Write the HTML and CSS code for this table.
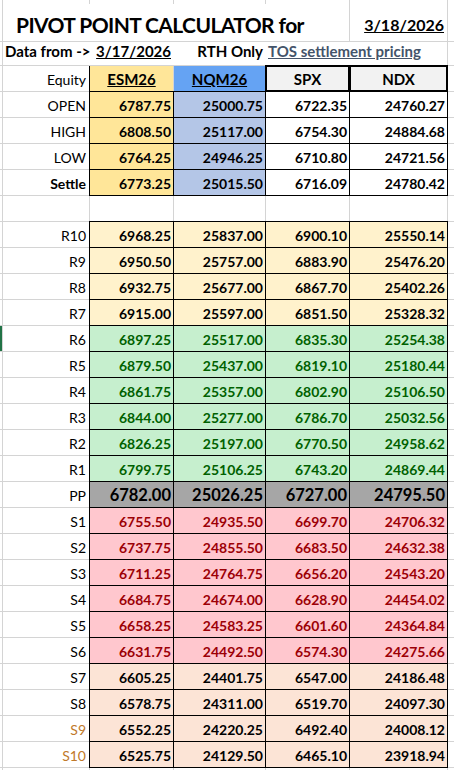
FILE: index.html
```html
<!DOCTYPE html>
<html lang="en">
<head>
  <meta charset="UTF-8" />
  <meta name="viewport" content="width=device-width, initial-scale=1" />
  <title>Pivot Point Calculator</title>
  <link rel="stylesheet" href="styles.css">
</head>
<body>

<div class="sheet">

  <!-- top sliver of the row above -->
  <div class="row">
    <div class="c"></div><div class="c"></div><div class="c"></div><div class="c"></div>
    <div class="c"></div><div class="c"></div><div class="c"></div>
  </div>

  <div class="row">
    <div class="c"></div>
    <div class="c title">PIVOT POINT CALCULATOR for</div>
    <div class="c today">3/18/2026</div>
    <div class="c"></div>
  </div>

  <div class="row">
    <div class="c"></div>
    <div class="c info">
      <span class="info-from">Data from -&gt;</span>
      <span class="info-date">3/17/2026</span>
      <span class="info-rth">RTH Only</span>
      <span class="info-link">TOS settlement pricing</span>
    </div>
    <div class="c"></div>
  </div>

  <div class="row">
    <div class="c"></div>
    <div class="c lbl">Equity</div>
    <div class="c hdr es-hdr"><u>ESM26</u></div>
    <div class="c hdr nq-hdr"><u>NQM26</u></div>
    <div class="c hdr ix-hdr">SPX</div>
    <div class="c hdr ix-hdr">NDX</div>
    <div class="c"></div>
  </div>

  <!-- prior session -->
  <div class="row">
    <div class="c"></div><div class="c lbl">OPEN</div>
    <div class="c num es">6787.75</div><div class="c num nq">25000.75</div>
    <div class="c num">6722.35</div><div class="c num">24760.27</div><div class="c"></div>
  </div>
  <div class="row">
    <div class="c"></div><div class="c lbl">HIGH</div>
    <div class="c num es">6808.50</div><div class="c num nq">25117.00</div>
    <div class="c num">6754.30</div><div class="c num">24884.68</div><div class="c"></div>
  </div>
  <div class="row">
    <div class="c"></div><div class="c lbl">LOW</div>
    <div class="c num es">6764.25</div><div class="c num nq">24946.25</div>
    <div class="c num">6710.80</div><div class="c num">24721.56</div><div class="c"></div>
  </div>
  <div class="row">
    <div class="c"></div><div class="c lbl bold">Settle</div>
    <div class="c num es">6773.25</div><div class="c num nq">25015.50</div>
    <div class="c num">6716.09</div><div class="c num">24780.42</div><div class="c"></div>
  </div>

  <div class="row">
    <div class="c"></div><div class="c"></div><div class="c"></div><div class="c"></div>
    <div class="c"></div><div class="c"></div><div class="c"></div>
  </div>

  <!-- resistance -->
  <div class="row far-r">
    <div class="c"></div><div class="c lbl">R10</div>
    <div class="c num">6968.25</div><div class="c num">25837.00</div>
    <div class="c num">6900.10</div><div class="c num">25550.14</div><div class="c"></div>
  </div>
  <div class="row far-r">
    <div class="c"></div><div class="c lbl">R9</div>
    <div class="c num">6950.50</div><div class="c num">25757.00</div>
    <div class="c num">6883.90</div><div class="c num">25476.20</div><div class="c"></div>
  </div>
  <div class="row far-r">
    <div class="c"></div><div class="c lbl">R8</div>
    <div class="c num">6932.75</div><div class="c num">25677.00</div>
    <div class="c num">6867.70</div><div class="c num">25402.26</div><div class="c"></div>
  </div>
  <div class="row far-r">
    <div class="c"></div><div class="c lbl">R7</div>
    <div class="c num">6915.00</div><div class="c num">25597.00</div>
    <div class="c num">6851.50</div><div class="c num">25328.32</div><div class="c"></div>
  </div>
  <div class="row near-r">
    <div class="c marker"></div><div class="c lbl">R6</div>
    <div class="c num">6897.25</div><div class="c num">25517.00</div>
    <div class="c num">6835.30</div><div class="c num">25254.38</div><div class="c"></div>
  </div>
  <div class="row near-r">
    <div class="c"></div><div class="c lbl">R5</div>
    <div class="c num">6879.50</div><div class="c num">25437.00</div>
    <div class="c num">6819.10</div><div class="c num">25180.44</div><div class="c"></div>
  </div>
  <div class="row near-r">
    <div class="c"></div><div class="c lbl">R4</div>
    <div class="c num">6861.75</div><div class="c num">25357.00</div>
    <div class="c num">6802.90</div><div class="c num">25106.50</div><div class="c"></div>
  </div>
  <div class="row near-r">
    <div class="c"></div><div class="c lbl">R3</div>
    <div class="c num">6844.00</div><div class="c num">25277.00</div>
    <div class="c num">6786.70</div><div class="c num">25032.56</div><div class="c"></div>
  </div>
  <div class="row near-r">
    <div class="c"></div><div class="c lbl">R2</div>
    <div class="c num">6826.25</div><div class="c num">25197.00</div>
    <div class="c num">6770.50</div><div class="c num">24958.62</div><div class="c"></div>
  </div>
  <div class="row near-r">
    <div class="c"></div><div class="c lbl">R1</div>
    <div class="c num">6799.75</div><div class="c num">25106.25</div>
    <div class="c num">6743.20</div><div class="c num">24869.44</div><div class="c"></div>
  </div>

  <!-- pivot -->
  <div class="row pivot">
    <div class="c"></div><div class="c lbl">PP</div>
    <div class="c num">6782.00</div><div class="c num">25026.25</div>
    <div class="c num">6727.00</div><div class="c num">24795.50</div><div class="c"></div>
  </div>

  <!-- support -->
  <div class="row near-s">
    <div class="c"></div><div class="c lbl">S1</div>
    <div class="c num">6755.50</div><div class="c num">24935.50</div>
    <div class="c num">6699.70</div><div class="c num">24706.32</div><div class="c"></div>
  </div>
  <div class="row near-s">
    <div class="c"></div><div class="c lbl">S2</div>
    <div class="c num">6737.75</div><div class="c num">24855.50</div>
    <div class="c num">6683.50</div><div class="c num">24632.38</div><div class="c"></div>
  </div>
  <div class="row near-s">
    <div class="c"></div><div class="c lbl">S3</div>
    <div class="c num">6711.25</div><div class="c num">24764.75</div>
    <div class="c num">6656.20</div><div class="c num">24543.20</div><div class="c"></div>
  </div>
  <div class="row near-s">
    <div class="c"></div><div class="c lbl">S4</div>
    <div class="c num">6684.75</div><div class="c num">24674.00</div>
    <div class="c num">6628.90</div><div class="c num">24454.02</div><div class="c"></div>
  </div>
  <div class="row near-s">
    <div class="c"></div><div class="c lbl">S5</div>
    <div class="c num">6658.25</div><div class="c num">24583.25</div>
    <div class="c num">6601.60</div><div class="c num">24364.84</div><div class="c"></div>
  </div>
  <div class="row near-s">
    <div class="c"></div><div class="c lbl">S6</div>
    <div class="c num">6631.75</div><div class="c num">24492.50</div>
    <div class="c num">6574.30</div><div class="c num">24275.66</div><div class="c"></div>
  </div>
  <div class="row far-s">
    <div class="c"></div><div class="c lbl">S7</div>
    <div class="c num">6605.25</div><div class="c num">24401.75</div>
    <div class="c num">6547.00</div><div class="c num">24186.48</div><div class="c"></div>
  </div>
  <div class="row far-s">
    <div class="c"></div><div class="c lbl">S8</div>
    <div class="c num">6578.75</div><div class="c num">24311.00</div>
    <div class="c num">6519.70</div><div class="c num">24097.30</div><div class="c"></div>
  </div>
  <div class="row far-s">
    <div class="c"></div><div class="c lbl warn">S9</div>
    <div class="c num">6552.25</div><div class="c num">24220.25</div>
    <div class="c num">6492.40</div><div class="c num">24008.12</div><div class="c"></div>
  </div>
  <div class="row far-s">
    <div class="c"></div><div class="c lbl warn">S10</div>
    <div class="c num">6525.75</div><div class="c num">24129.50</div>
    <div class="c num">6465.10</div><div class="c num">23918.94</div><div class="c"></div>
  </div>

  <div class="row">
    <div class="c"></div><div class="c"></div><div class="c"></div><div class="c"></div>
    <div class="c"></div><div class="c"></div><div class="c"></div>
  </div>

</div>

</body>
</html>
```

FILE: styles.css
```css
:root {
  --grid: #d4d4d4;
  --es: #ffe699;
  --nq-hdr: #65a3f3;
  --nq: #b4c6e7;
  --ix-hdr: #f2f2f2;
  --far-r: #fff2cc;
  --good-bg: #c6efce;
  --good-fg: #006100;
  --bad-bg: #ffc7ce;
  --bad-fg: #9c0006;
  --far-s: #fce4d6;
  --pp: #a6a6a6;
}

body {
  margin: 0;
  overflow: hidden;
  background: #fff;
  color: #000;
  font-family: Lato, "Noto Sans", sans-serif;
}

/* spreadsheet: the 1px gaps show through as gridlines */
.sheet {
  display: grid;
  grid-template-columns: 2px 86px 83px 91px 83px 97px 1fr;
  grid-template-rows: 3px 37px 23px 25px repeat(26, 25px) 10px;
  gap: 1px;
  background: var(--grid);
}

.row {
  display: contents;
}

.c {
  background: #fff;
  display: flex;
  align-items: flex-end;
  justify-content: flex-end;
  padding: 0 2px 4px 0;
  min-width: 0;
  white-space: nowrap;
  font-size: 14px;
  line-height: 1;
}

.marker {
  background: #217346;
}

/* title rows */
.title {
  grid-column: 2 / 6;
  justify-content: flex-start;
  padding: 0 0 6px 13px;
  font-size: 21px;
  font-weight: 700;
  letter-spacing: -0.6px;
}

.today {
  padding: 0 3px 8px 0;
  font-size: 16px;
  font-weight: 700;
  text-decoration: underline;
}

.info {
  grid-column: 2 / 7;
  display: grid;
  grid-template-columns: 87px 84px 92px 1fr;
  align-items: end;
  padding: 0 0 6px 0;
  font-weight: 700;
  font-size: 15px;
}

.info-from {
  padding-left: 2px;
}

.info-date,
.info-rth {
  justify-self: end;
  padding-right: 3px;
}

.info-date {
  text-decoration: underline;
}

.info-link {
  padding-left: 2px;
  color: #44546a;
  text-decoration: underline;
}

/* column headers */
.lbl {
  padding-right: 3px;
}

.bold {
  font-weight: 700;
}

.warn {
  color: #c0792a;
}

.hdr {
  justify-content: center;
  padding: 0 0 4px 0;
  font-size: 15px;
  font-weight: 700;
  outline: 1px solid #000;
}

.es-hdr {
  background: var(--es);
  outline: none;
  box-shadow: -1px 0 0 #000;
}

.nq-hdr {
  background: var(--nq-hdr);
  outline: none;
}

.ix-hdr {
  background: var(--ix-hdr);
  outline: 2px solid #000;
  outline-offset: -1px;
}

/* number cells */
.num {
  font-size: 14px;
  font-weight: 700;
  outline: 1px solid #000;
}

.es {
  background: var(--es);
}

.nq {
  background: var(--nq);
}

.far-r .num {
  background: var(--far-r);
}

.near-r .num {
  background: var(--good-bg);
  color: var(--good-fg);
}

.pivot .num {
  background: var(--pp);
  font-size: 16.5px;
}

.near-s .num {
  background: var(--bad-bg);
  color: var(--bad-fg);
}

.far-s .num {
  background: var(--far-s);
}
```
